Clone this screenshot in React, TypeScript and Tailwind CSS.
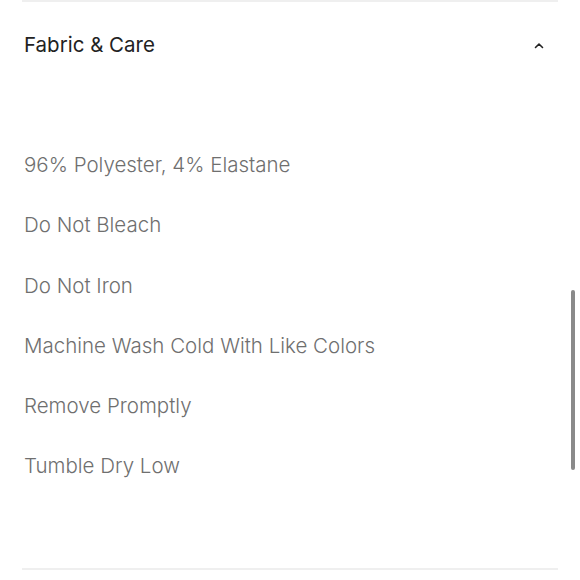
const items = [
  "96% Polyester, 4% Elastane",
  "Do Not Bleach",
  "Do Not Iron",
  "Machine Wash Cold With Like Colors",
  "Remove Promptly",
  "Tumble Dry Low",
];

export default function App() {
  return (
    <div
      className="relative w-[580px] h-[580px] overflow-hidden bg-white"
      style={{ fontFamily: "Inter, 'Noto Sans', sans-serif" }}
    >
      <div className="px-[22px]">
        <div className="border-t-2 border-[#efefef]">
          <div className="flex h-[86px] items-center justify-between pl-[2px] pr-[14px]">
            <span className="text-[20.5px] text-[#222]">Fabric &amp; Care</span>
            <svg width="10" height="7" viewBox="0 0 10 7" fill="none">
              <path
                d="M1.5 5.5L5 2l3.5 3.5"
                stroke="#222"
                strokeWidth="1.6"
                strokeLinecap="round"
                strokeLinejoin="round"
              />
            </svg>
          </div>
          <ul className="pt-[47px] pb-[71px] pl-[2px]">
            {items.map((item) => (
              <li
                key={item}
                className="h-[60.3px] leading-[60px] text-[20.5px] font-light text-[#6f6f6f]"
              >
                {item}
              </li>
            ))}
          </ul>
        </div>
        <div className="border-t-2 border-[#efefef]" />
      </div>
      <div className="absolute left-[571px] top-[290px] h-[180px] w-[4px] rounded-full bg-[#8a8a8a]" />
    </div>
  );
}
